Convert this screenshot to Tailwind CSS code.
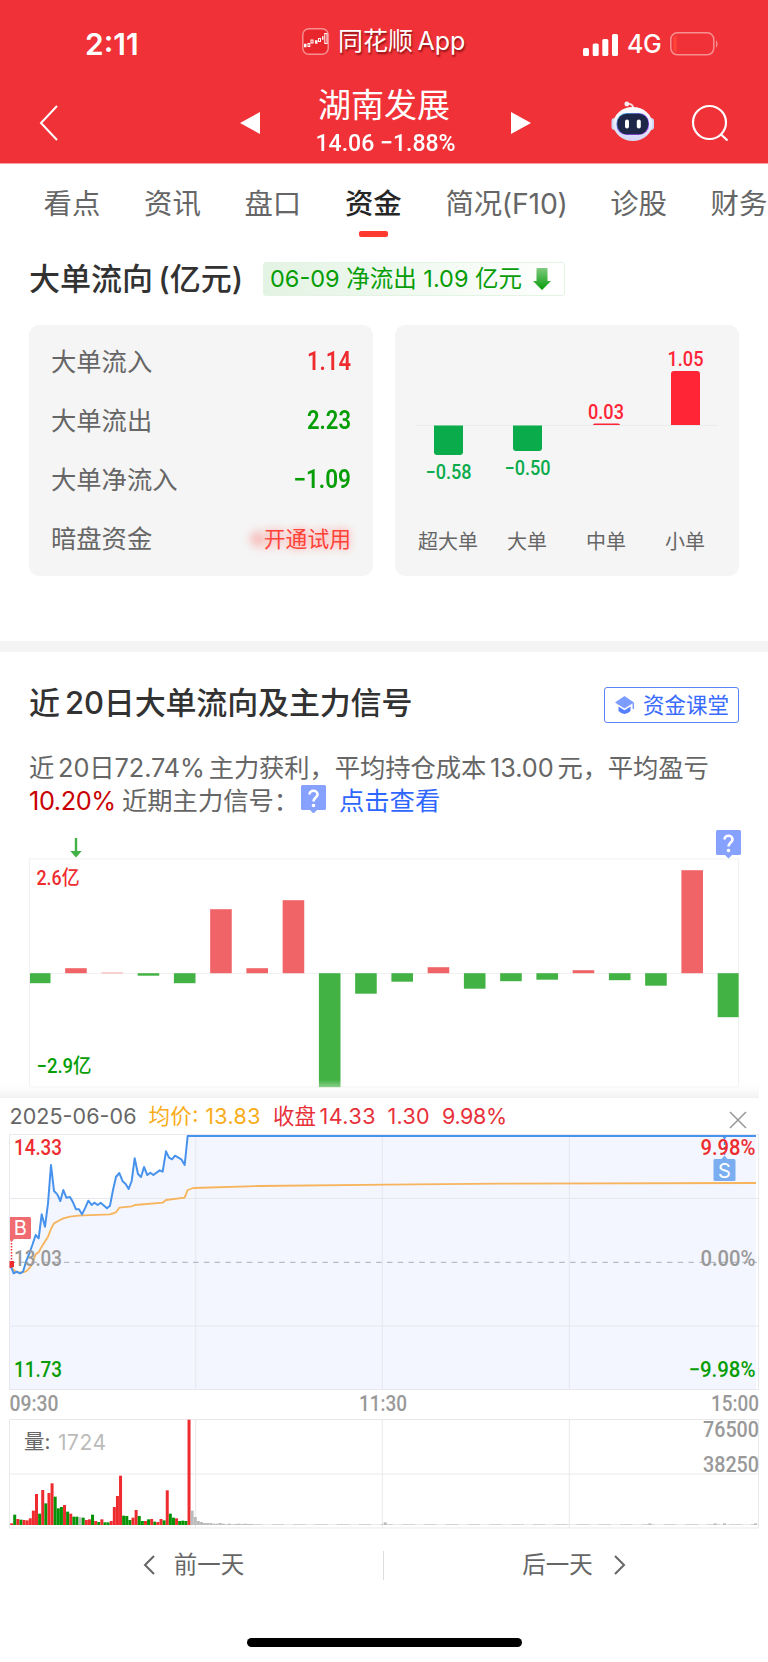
<!DOCTYPE html>
<html lang="zh-CN">
<head>
    <meta charset="UTF-8">
    <meta name="viewport" content="width=device-width, initial-scale=1.0">
    <title>湖南发展 - 资金</title>
    <script src="https://cdn.jsdelivr.net/npm/@tailwindcss/browser@4"></script>
</head>
<body class="bg-white font-['Inter','Noto_Sans_CJK_SC',sans-serif] text-[#323232] overflow-hidden">
    <div class="w-[768px] h-[1662px] flex flex-col overflow-hidden">

        <!-- 顶部 -->
        <header class="bg-[#f03238] text-white h-[164px] shrink-0 border-b border-[#f8a0a2]">
            <div class="h-[84px] flex items-center pl-[85px] pr-[49px] pt-1">
                <span class="text-[30px] font-semibold w-[217px]">2:11</span>
                <svg class="mt-[-6px]" width="27" height="27" viewBox="0 0 27 27">
                    <rect x="0.8" y="0.8" width="25.4" height="25.4" rx="6" fill="#e8262b" stroke="#f69092" stroke-width="1.4"/>
                    <path d="M2 17.500h2.500M13 14h2.500M20 10h1.500" stroke="#fff" stroke-width="3.500"/>
                    <g fill="none" stroke="#fff" stroke-width="1"><rect x="6" y="15.500" width="1.800" height="3"/><rect x="9" y="12" width="2" height="3"/><rect x="16.500" y="10.500" width="2" height="3"/><rect x="22.800" y="5.500" width="2.200" height="10"/></g>
                </svg>
                <span class="ml-[9px] mt-[-5px] text-[25px] [word-spacing:-2.500px] [text-shadow:1px_2px_2px_#8a1014] whitespace-nowrap w-[245px]">同花顺 App</span>
                <svg class="mt-px" width="35" height="22" viewBox="0 0 35 22" fill="#fff">
                    <rect x="0" y="14" width="6" height="8" rx="1.500"/>
                    <rect x="9.700" y="9.500" width="6" height="12.500" rx="1.500"/>
                    <rect x="19.300" y="5" width="6" height="17" rx="1.500"/>
                    <rect x="29" y="0" width="6" height="22" rx="1.500"/>
                </svg>
                <span class="ml-[9px] text-[25px] font-medium w-[34px] tracking-[-0.5px] mt-[1px]">4G</span>
                <svg class="ml-[9px] shrink-0" width="49" height="24" viewBox="0 0 49 24">
                    <rect x="0.800" y="0.800" width="43" height="22" rx="6.500" fill="none" stroke="#f78f91" stroke-width="1.500"/>
                    <path d="M46 8.500c2 1 2 6 0 7z" fill="#f78f91"/>
                    <path d="M6.500 4v16c-2 0-3-1-3-3V7c0-2 1-3 3-3z" fill="#ff453a"/>
                </svg>
            </div>
            <div class="h-[78px] flex items-center pl-[39px] pr-[37px]">
                <svg width="19" height="36" viewBox="0 0 19 36" fill="none" stroke="#fff" stroke-width="2"><path d="M18 1L2 18l16 17"/></svg>
                <svg class="ml-[182px]" width="20" height="22" viewBox="0 0 20 22" fill="#fff"><path d="M20 0v22L0 11z"/></svg>
                <div class="w-[251px] flex flex-col items-center mt-[-6px]">
                    <div class="text-[33px] leading-[44px] -ml-[3px]">湖南发展</div>
                    <div class="font-['Roboto'] font-medium text-[24.500px] leading-[31px] whitespace-nowrap scale-x-[0.94]">14.06 −1.88%</div>
                </div>
                <svg width="20" height="22" viewBox="0 0 20 22" fill="#fff"><path d="M0 0v22l20-11z"/></svg>
                <svg class="ml-[80px] mt-[-4px]" width="44" height="40" viewBox="0 0 44 40">
                    <defs>
                        <linearGradient id="visor" x1="0" y1="0" x2="1" y2="1"><stop offset="0" stop-color="#3ec6d8"/><stop offset="0.500" stop-color="#7a4ff0"/><stop offset="1" stop-color="#b04cf0"/></linearGradient>
                        <linearGradient id="shell" x1="0" y1="0" x2="0" y2="1"><stop offset="0" stop-color="#fff"/><stop offset="1" stop-color="#d3d6f5"/></linearGradient>
                    </defs>
                    <path d="M16 3q6-1 6.500 5" fill="none" stroke="#f3dfe6" stroke-width="1.800"/>
                    <circle cx="15.800" cy="3" r="2.400" fill="#fbeef2"/>
                    <rect x="0.500" y="17" width="6" height="12" rx="3" fill="#cfd6f5"/>
                    <rect x="37" y="17" width="6" height="12" rx="3" fill="#cfd6f5"/>
                    <ellipse cx="21.800" cy="23" rx="19.500" ry="17" fill="url(#shell)"/>
                    <rect x="5.500" y="12" width="32.500" height="22" rx="10" fill="url(#visor)"/>
                    <rect x="6.300" y="12.700" width="31" height="20.500" rx="9.500" fill="#1f2748"/>
                    <rect x="14" y="18.500" width="4" height="9" rx="2" fill="#fff"/>
                    <rect x="25.800" y="18.500" width="4" height="9" rx="2" fill="#fff"/>
                </svg>
                <svg class="ml-[36px] mt-[-1px]" width="38" height="38" viewBox="0 0 38 38" fill="none" stroke="#fff" stroke-width="2.200"><circle cx="18.500" cy="18.500" r="16.500"/><path d="M29.500 30l7 6.500"/></svg>
            </div>
        </header>

        <!-- 标签栏 -->
        <nav class="h-[81px] shrink-0 flex gap-[43.700px] pl-[43.500px] pt-[19px] text-[28.400px] leading-[42px] text-[#666] whitespace-nowrap">
            <span>看点</span>
            <span>资讯</span>
            <span>盘口</span>
            <span class="flex flex-col items-center font-medium text-[#262626]">资金<i class="w-[29px] h-[6px] rounded-[2px] bg-[#ff3b30] mt-[6px]"></i></span>
            <span class="w-[121px] tracking-[-0.2px]">简况(F10)</span>
            <span>诊股</span>
            <span>财务</span>
        </nav>

        <!-- 大单流向 -->
        <section class="h-[396px] shrink-0 px-[29px] pt-[12px]">
            <div class="flex items-center h-[44px]">
                <h2 class="text-[31px] font-medium w-[234px] whitespace-nowrap [word-spacing:-3px]">大单流向 (亿元)</h2>
                <div class="flex items-center h-[34px] w-[302px] pl-[6px] rounded-[3px] border border-[#e4f4e4] bg-linear-to-r from-[#e3f3e3] to-white text-[#069d06] text-[23.500px] whitespace-nowrap">
                    <span class="w-[253px] shrink-0">06-09 净流出 1.09 亿元</span>
                    <svg class="ml-[10px] shrink-0" width="18" height="22" viewBox="0 0 18 22">
                        <defs><linearGradient id="down" x1="0" y1="0" x2="0" y2="1"><stop offset="0" stop-color="#7fca7f"/><stop offset="1" stop-color="#069d06"/></linearGradient></defs>
                        <path d="M4.500 0h9q1 0 1 1v12H18l-9 9-9-9h3.500V1q0-1 1-1z" fill="url(#down)"/>
                    </svg>
                </div>
            </div>
            <div class="flex gap-[22px] mt-[24px]">
                <div class="w-[344px] h-[251px] rounded-[10px] bg-[#f5f5f5] px-[22px] pt-[7px] text-[25.300px] text-[#666]">
                    <div class="h-[59.200px] flex items-center justify-between">大单流入<b class="font-['Roboto'] font-semibold text-[#ee2c2f] text-[25px] scale-x-[0.88] origin-right">1.14</b></div>
                    <div class="h-[59.200px] flex items-center justify-between">大单流出<b class="font-['Roboto'] font-semibold text-[#069d06] text-[25px] scale-x-[0.88] origin-right">2.23</b></div>
                    <div class="h-[59.200px] flex items-center justify-between">大单净流入<b class="font-['Roboto'] font-semibold text-[#069d06] text-[25px] scale-x-[0.90] origin-right">−1.09</b></div>
                    <div class="h-[59.200px] flex items-center justify-between">暗盘资金<span class="relative text-[21.800px] text-[#ff4238] [text-shadow:0_0_8px_#ff8a85]"><i class="absolute -left-[14px] top-[8px] size-[16px] rounded-full bg-[#f7a9a6]/70 blur-[4px]"></i>开通试用</span></div>
                </div>
                <div class="w-[344px] h-[251px] rounded-[10px] bg-[#f5f5f5]">
                    <svg width="344" height="251" viewBox="395 325 344 251" text-anchor="middle" font-size="20">
                        <path d="M416 425.500H718" stroke="#ebebeb"/>
                        <path d="M434 425.500h29V452q0 3-3 3h-23q-3 0-3-3zM513 425.500h29V448q0 3-3 3h-23q-3 0-3-3z" fill="#09ab4b"/>
                        <path d="M671 425V374q0-3 3-3h23q3 0 3 3v51zM593 425q0-1.500 2-1.500h23q2 0 2 1.500z" fill="#ff2436"/>
                        <g font-family="Roboto" font-weight="500">
                            <text x="448.500" y="478.500" fill="#09ab4b" textLength="46" lengthAdjust="spacingAndGlyphs">−0.58</text>
                            <text x="527.500" y="474.500" fill="#09ab4b" textLength="46" lengthAdjust="spacingAndGlyphs">−0.50</text>
                            <text x="606" y="418.500" fill="#ff2436" textLength="36" lengthAdjust="spacingAndGlyphs">0.03</text>
                            <text x="685.500" y="366" fill="#ff2436" textLength="36" lengthAdjust="spacingAndGlyphs">1.05</text>
                        </g>
                        <g fill="#666">
                            <text x="448" y="548.500">超大单</text>
                            <text x="527" y="548.500">大单</text>
                            <text x="606" y="548.500">中单</text>
                            <text x="685" y="548.500">小单</text>
                        </g>
                    </svg>
                </div>
            </div>
        </section>
        <div class="h-[11px] shrink-0 bg-[#f4f4f4]"></div>

        <!-- 近20日 -->
        <section class="h-[446px] shrink-0 px-[29px] pt-[29px] relative">
            <div class="flex items-center justify-between h-[44px]">
                <h2 class="text-[31px] font-medium whitespace-nowrap tracking-[-0.150px] [word-spacing:-3px]">近 20日大单流向及主力信号</h2>
                <div class="mt-[4px] w-[135px] h-[36px] border border-[#5b83f7] rounded-[3px] flex items-center pl-[9px] text-[21.500px] text-[#3a6bff] whitespace-nowrap">
                    <svg class="mr-[8px] shrink-0" width="21" height="19" viewBox="0 0 21 19">
                        <path d="M10.500 0L1 6.500l9.500 6 9.500-6z" fill="#7d9cff"/>
                        <path d="M4.500 10.500l6 3.800 6-3.800V15q-6 6-12 0z" fill="#5580ff"/>
                        <path d="M19.300 7v6" stroke="#7d9cff" stroke-width="1.500"/>
                    </svg>资金课堂
                </div>
            </div>
            <div class="mt-[26px] text-[25.300px] leading-[33px] text-[#666] whitespace-nowrap">
                <div class="tracking-[-0.070px] [word-spacing:-3.200px]">近 20日72.74% 主力获利，平均持仓成本 13.00 元，平均盈亏</div>
                <div class="flex items-center">
                    <span class="text-[#c80000] w-[93px] tracking-[-0.400px]">10.20%</span>
                    <span class="w-[179px]">近期主力信号：</span>
                    <svg class="mt-[-3px]" width="25" height="28" viewBox="0 0 25 28"><path d="M1.500 0h22q1.500 0 1.500 1.500v22q0 1.500-1.500 1.500H16l-3.500 3.500L9 25H1.500Q0 25 0 23.500v-22Q0 0 1.500 0z" fill="#87a1ff"/><path d="M8.500 9.500c0-5 8-5 8 0 0 3-4 3-4 7" fill="none" stroke="#fff" stroke-width="2.600"/><circle cx="12.500" cy="20.500" r="1.800" fill="#fff"/></svg>
                    <span class="ml-[13px] text-[#2f66ff]">点击查看</span>
                </div>
            </div>
            <svg class="absolute left-0 top-[168px]" width="768" height="278" viewBox="0 820 768 278">
                <defs><linearGradient id="fade" x1="0" y1="0" x2="0" y2="1"><stop offset="0" stop-color="#fff" stop-opacity="0"/><stop offset="1" stop-color="#f1f1f1"/></linearGradient></defs>
                <path d="M29.500 859H738.500V1087H29.500z" fill="none" stroke="#f1f1f1" stroke-width="1.200"/>
                <path d="M30 973.500H738" stroke="#f1f1f1"/>
                <g id="flow-bars"></g>
                <path d="M74.800 838h2.400v13h4.500L76 857.500l-5.700-6.500h4.500z" fill="#43b244"/>
                <g transform="translate(716 830)"><path d="M1.500 0h22q1.500 0 1.500 1.500v22q0 1.500-1.500 1.500H16l-3.500 3.500L9 25H1.500Q0 25 0 23.500v-22Q0 0 1.500 0z" fill="#87a1ff"/><path d="M8.500 9.500c0-5 8-5 8 0 0 3-4 3-4 7" fill="none" stroke="#fff" stroke-width="2.600"/><circle cx="12.500" cy="20.500" r="1.800" fill="#fff"/></g>
                <g font-size="20" font-weight="500" font-family="Roboto, 'Noto Sans CJK SC', sans-serif">
                    <text x="36.500" y="885" fill="#ee2c2f" textLength="43" lengthAdjust="spacingAndGlyphs">2.6亿</text>
                    <text x="36.500" y="1073" fill="#069d06" textLength="55" lengthAdjust="spacingAndGlyphs">−2.9亿</text>
                </g>
                <rect x="0" y="1080" width="759" height="18" fill="url(#fade)"/>
            </svg>
        </section>

        <!-- 分时 -->
        <section class="h-[436px] shrink-0">
            <svg width="768" height="436" viewBox="0 1098 768 436" font-family="Inter, 'Noto Sans CJK SC', sans-serif">
                <g font-size="21.500">
                    <text x="9.500" y="1124" fill="#666" textLength="127">2025-06-06</text>
                    <text x="148.500" y="1124" fill="#f9ac19" textLength="112">均价: 13.83</text>
                    <g fill="#e8303a">
                        <text x="273" y="1124">收盘</text>
                        <text x="319.500" y="1124" textLength="56">14.33</text>
                        <text x="387.500" y="1124" textLength="42">1.30</text>
                        <text x="442" y="1124" textLength="65">9.98%</text>
                    </g>
                </g>
                <path d="M730 1112l16 16M746 1112l-16 16" stroke="#999" stroke-width="1.600"/>

                <g transform="translate(0 1085) scale(0.33333)">
                    <path id="price-area" fill="#f3f6fe"/>
                </g>
                <path d="M9.500 1134.500H758.500V1389.500H9.500zM9.500 1198.500H758.500M9.500 1326H758.500M195.700 1134.500V1389.500M382.300 1134.500V1389.500M569.300 1134.500V1389.500" fill="none" stroke="#e6e8ee"/>
                <path d="M10 1262.300H757" stroke="#a9adb8" stroke-dasharray="5.500 5.270"/>
                <g transform="translate(0 1085) scale(0.33333)" fill="none" stroke-linejoin="round">
                    <path d="M33 548L50 562L70 562L80 558L92 545L107 508L116 502L125 485L144 455L153 432L162 415L180 405L190 400L210 395L235 392L330 388L348 382L358 368L395 364L405 360L488 353L498 345L554 338L563 315L580 309L780 303L1160 299L1500 296L2268 294" stroke="#f7b45c" stroke-width="5.500"/>
                    <path id="price-line" stroke="#4792ec" stroke-width="6"/>
                </g>
                <path d="M11.500 1240v20" stroke="#ee2c2f" stroke-width="1.500" stroke-dasharray="1.500 1.500"/>
                <path d="M9.500 1261h4.500v6l-4.500 1z" fill="#ee2c2f"/>
                <path d="M10 1217h19.500q1.500 0 1.500 1.500v19q0 1.500-1.500 1.500H14l-2.500 3-1.500-2z" fill="#f06c70"/>
                <text x="20.300" y="1235" font-size="20" fill="#fff" text-anchor="middle">B</text>
                <path d="M724.500 1137v20" stroke="#4792ec" stroke-width="1.500" stroke-dasharray="3 2"/>
                <path d="M721.500 1136h6l-3 3z" fill="#4792ec"/>
                <path d="M715 1159h6.500l3-3.500 3 3.500h6.500q1.500 0 1.500 1.500v19q0 1.500-1.500 1.500h-19q-1.500 0-1.500-1.500v-19q0-1.500 1.500-1.500z" fill="#7aaef0"/>
                <text x="724.500" y="1177.500" font-size="20" fill="#fff" text-anchor="middle">S</text>

                <g font-family="Roboto" font-weight="500" font-size="21.500">
                    <text x="14" y="1155" fill="#ee2c2f" textLength="48" lengthAdjust="spacingAndGlyphs">14.33</text>
                    <text x="14" y="1266" fill="#999" textLength="48" lengthAdjust="spacingAndGlyphs">13.03</text>
                    <text x="14" y="1377" fill="#069d06" textLength="48" lengthAdjust="spacingAndGlyphs">11.73</text>
                    <text x="9.500" y="1411" fill="#999" textLength="49" lengthAdjust="spacingAndGlyphs">09:30</text>
                    <g text-anchor="end">
                        <text x="755.500" y="1155" fill="#ee2c2f" textLength="55" lengthAdjust="spacingAndGlyphs">9.98%</text>
                        <text x="755.500" y="1266" fill="#999" textLength="55" lengthAdjust="spacingAndGlyphs">0.00%</text>
                        <text x="755.500" y="1377" fill="#069d06" textLength="67" lengthAdjust="spacingAndGlyphs">−9.98%</text>
                        <g fill="#999">
                            <text x="407" y="1411" textLength="48" lengthAdjust="spacingAndGlyphs">11:30</text>
                            <text x="759" y="1411" textLength="48" lengthAdjust="spacingAndGlyphs">15:00</text>
                        </g>
                    </g>
                </g>

                <path d="M9.500 1419.500H758.500V1528H9.500zM9.500 1474H758.500M195.700 1419.500V1528M382.300 1419.500V1528M569.300 1419.500V1528" fill="none" stroke="#e9e9e9"/>
                <g id="volume-bars"></g>
                <text x="24" y="1449" font-size="20.500" fill="#666">量:</text>
                <text x="58" y="1449.500" font-size="21" fill="#bbb" textLength="48">1724</text>
                <g font-family="Roboto" font-weight="500" font-size="21.500" fill="#999" text-anchor="end">
                    <text x="759" y="1437" textLength="56" lengthAdjust="spacingAndGlyphs">76500</text>
                    <text x="759" y="1472" textLength="56" lengthAdjust="spacingAndGlyphs">38250</text>
                </g>
            </svg>
        </section>

        <!-- 翻页 -->
        <div class="h-[62px] shrink-0 flex items-center text-[23.500px] text-[#666]">
            <div class="w-[383px] flex items-center justify-center gap-[19px] pl-[4px]">
                <svg width="12" height="20" viewBox="0 0 12 20" fill="none" stroke="#666" stroke-width="2"><path d="M11 1L2 10l9 9"/></svg>
                前一天
            </div>
            <div class="w-px h-[29px] bg-[#ddd]"></div>
            <div class="flex-1 flex items-center justify-center gap-[21px] pr-[4px]">
                后一天
                <svg width="12" height="20" viewBox="0 0 12 20" fill="none" stroke="#666" stroke-width="2"><path d="M1 1l9 9-9 9"/></svg>
            </div>
        </div>
        <div class="mt-[42px] ml-[247px] w-[275px] h-[9px] rounded-full bg-black shrink-0"></div>
    </div>

    <script>
        // 近20日净流入，正数为流入
        const flow = [-10, 5, 0.5, -2.5, -10, 64, 5, 73, -114, -20.5, -8.5, 6, -15.5, -8, -6.5, 3, -7, -12.5, 103, -44];
        document.getElementById('flow-bars').innerHTML = flow.map((v, i) => {
            const x = i === 0 ? 30 : 28.9 + i * 36.25;
            const w = i === 0 ? 20.5 : i === 19 ? 21 : 21.6;
            const color = v > 0 ? '#f06467' : '#43b244';
            return `<rect x="${x}" y="${v > 0 ? 973.2 - v : 973.2}" width="${w}" height="${Math.abs(v)}" fill="${color}"/>`;
        }).join('');

        // 分时价格
        const price = '33,545 41,565 50,560 60,565 69,560 78,530 88,505 97,480 107,450 116,460 125,388 135,425 144,355 153,240 162,318 172,328 181,348 190,315 199,338 210,336 219,352 228,373 237,373 246,388 256,368 265,347 275,360 283,353 293,360 302,353 321,370 330,362 339,315 348,276 358,264 368,289 377,297 386,312 395,288 404,220 414,267 423,276 432,246 442,270 451,263 460,270 479,256 488,260 498,199 507,218 516,223 525,212 544,223 554,240 563,153 2268,153';
        const line = 'M' + price.split(' ').join('L');
        document.getElementById('price-line').setAttribute('d', line);
        document.getElementById('price-area').setAttribute('d', line + 'L2268,914L30,914L30,545Z');

        // 成交量：颜色 + 高度
        const volume = 'r5 g31 r18 g16 r15 r14 r20 r43 r93 g34 r105 g65 r96 r125 g85 g50 g54 r60 g40 r34 g25 g25 e23 g22 r15 r17 g31 r12 g9 r17 g8 g8 r12 r54 r87 r148 g28 g27 g15 r22 r45 g27 g12 r12 g17 r18 g10 r9 r18 g14 r104 g34 g22 r20 g12 g13 g12 r316 e43 e24 e12 e9 e6 e6 e6 e4 e4 e6 e4 e2 e4 e2 e3 e4 e3 e4 e3 e3'.split(' ');
        while (volume.length < 240) volume.push(volume.length === 120 ? 'e8' : [205, 226, 229, 239].includes(volume.length) ? 'e5' : volume.length % 7 < 4 ? 'e2' : 'e1');
        const colors = { r: '#ee2c2f', g: '#069206', e: '#bbb' };
        document.getElementById('volume-bars').innerHTML = volume.map((v, i) => {
            const h = v.slice(1) / 3;
            return `<rect x="${10.1 + i * 3.113}" y="${1525 - h}" width="3" height="${h}" fill="${colors[v[0]]}"/>`;
        }).join('');
    </script>
</body>
</html>
